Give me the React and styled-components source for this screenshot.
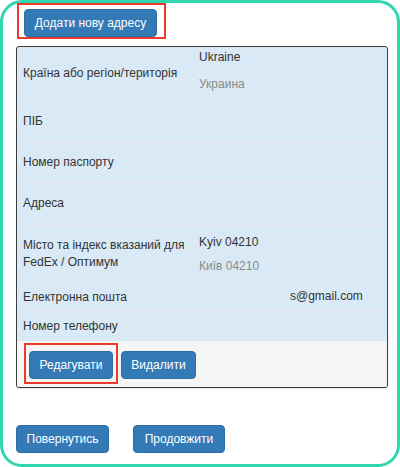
import React from 'react';
import styled, { createGlobalStyle } from 'styled-components';

const GlobalStyle = createGlobalStyle`
  body {
    margin: 0;
    background: #ffffff;
    font-family: 'Liberation Sans', Arial, Helvetica, sans-serif;
  }
`;

const rows = [
  { label: 'Країна або регіон/територія', values: ['Ukraine', 'Украина'], height: 53, gap: 11, lift: 6 },
  { label: 'ПІБ', values: [], height: 42 },
  { label: 'Номер паспорту', values: [], height: 40 },
  { label: 'Адреса', values: [], height: 42 },
  { label: 'Місто та індекс вказаний для FedEx / Оптимум', values: ['Kyiv 04210', 'Київ 04210'], height: 59, gap: 8, lift: 0 },
  { label: 'Електронна пошта', email: 's@gmail.com', height: 28 },
  { label: 'Номер телефону', values: [], height: 30 },
];

const App = () => {
  return (
    <>
      <GlobalStyle />
      <FrameStyle>
        <HighlightStyle $pad="4px 7px 0 5px">
          <ButtonStyle $w={133}>Додати нову адресу</ButtonStyle>
        </HighlightStyle>
        <TableStyle>
          {rows.map((row, i) => (
            <RowStyle key={i} $h={row.height} $first={i === 0}>
              <LabelStyle>{row.label}</LabelStyle>
              {row.email ? (
                <EmailStyle>{row.email}</EmailStyle>
              ) : (
                <ValuesStyle $gap={row.gap} $lift={row.lift}>
                  {row.values.map((v, j) => (
                    <ValueStyle key={j} $muted={j === 1}>
                      {v}
                    </ValueStyle>
                  ))}
                </ValuesStyle>
              )}
            </RowStyle>
          ))}
          <ActionsStyle>
            <HighlightStyle $pad="6px 3px 3px 3px">
              <ButtonStyle $w={84}>Редагувати</ButtonStyle>
            </HighlightStyle>
            <ButtonStyle $w={75} $top={8}>
              Видалити
            </ButtonStyle>
          </ActionsStyle>
        </TableStyle>
        <FooterStyle>
          <ButtonStyle $w={93}>Повернутись</ButtonStyle>
          <ButtonStyle $w={92}>Продовжити</ButtonStyle>
        </FooterStyle>
      </FrameStyle>
    </>
  );
};

export default App;

const FrameStyle = styled.div`
  box-sizing: border-box;
  width: 400px;
  height: 467px;
  border: 3px solid #30d6ae;
  border-radius: 22px;
  padding: 0 9px 0 13px;
  display: flex;
  flex-direction: column;
  align-items: flex-start;
`;

const HighlightStyle = styled.div`
  display: inline-flex;
  border: 2px solid #ec3b2c;
  padding: ${(p) => p.$pad};
  margin-left: 1px;
`;

const ButtonStyle = styled.button`
  box-sizing: border-box;
  width: ${(p) => p.$w}px;
  height: 28px;
  margin-top: ${(p) => p.$top || 0}px;
  padding: 0;
  border: 1px solid #2e6da4;
  border-radius: 4px;
  background: #337ab7;
  color: #ffffff;
  font-family: 'Liberation Sans', Arial, sans-serif;
  font-size: 12px;
  cursor: pointer;
`;

const TableStyle = styled.div`
  box-sizing: border-box;
  width: 372px;
  margin-top: 7px;
  border: 1px solid #3c3c3c;
  border-radius: 3px;
  background: #d9eaf6;
  overflow: hidden;
  box-shadow: 0 1px 1px rgba(0, 0, 0, 0.1);
`;

const RowStyle = styled.div`
  box-sizing: border-box;
  display: flex;
  align-items: center;
  min-height: ${(p) => p.$h}px;
  margin: 0 3px 0 4px;
  border-top: ${(p) => (p.$first ? 'none' : '1px solid #e3dfe9')};
  font-size: 12px;
  color: #333333;
`;

const LabelStyle = styled.div`
  width: 168px;
  flex: none;
  padding: 0 8px 0 2px;
  line-height: 17px;
`;

const ValuesStyle = styled.div`
  display: flex;
  flex-direction: column;
  gap: ${(p) => p.$gap || 0}px;
  padding-bottom: ${(p) => p.$lift || 0}px;
`;

const ValueStyle = styled.div`
  line-height: 16px;
  color: ${(p) => (p.$muted ? '#8a8a8a' : '#333333')};
`;

const EmailStyle = styled.div`
  padding-left: 91px;
  margin-top: -3px;
  color: #333333;
`;

const ActionsStyle = styled.div`
  display: flex;
  align-items: flex-start;
  gap: 3px;
  height: 46px;
  box-sizing: border-box;
  padding: 2px 0 0 6px;
  background: #f5f5f5;
`;

const FooterStyle = styled.div`
  display: flex;
  gap: 24px;
  margin-top: 37px;
`;
